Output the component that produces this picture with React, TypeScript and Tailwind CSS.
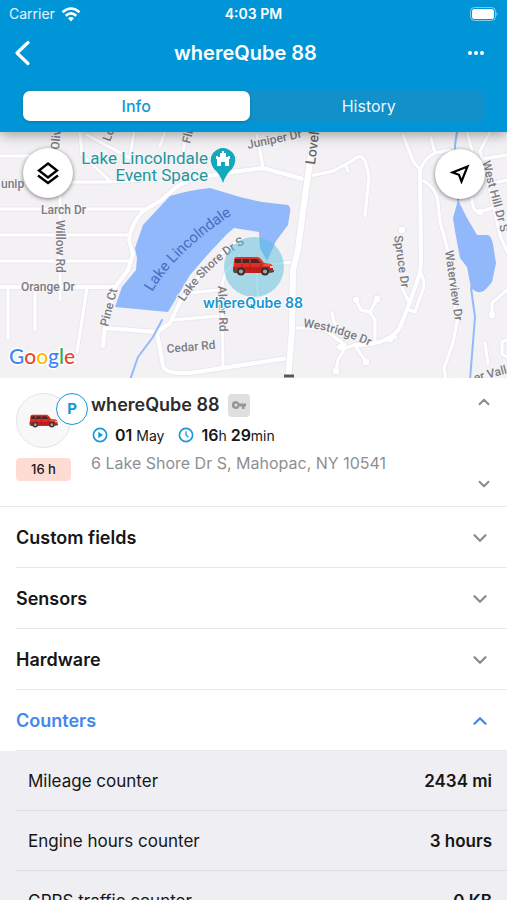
import { useState } from "react";
import { ChevronDown, ChevronUp } from "lucide-react";

const thinRoads = [
  "M0 156H62",
  "M54 132V160",
  "M60 182H107L143 180",
  "M0 182H40",
  "M0 209H143",
  "M0 235H130",
  "M0 261H128",
  "M60 182V300",
  "M110 181L82 155L80 132",
  "M87 135L117 151L130 158L134 132",
  "M186 132L182 160",
  "M165 132L160 146",
  "M257 135L263 168",
  "M8 288V338",
  "M35 290V330",
  "M87 288L77 352",
  "M310 176L333 171L352 161Q361 152 365 161L369 176L365 216",
  "M346 166L348 171",
  "M403 135L413 161L420 170",
  "M431 138L435 153Q424 158 420 171",
  "M435 153L450 150",
  "M467 132L472 150",
  "M490 132L480 151L487 178L500 235L507 252",
  "M482 159L507 155",
  "M490 184L507 180",
  "M472 198Q472 212 480 212L492 208",
  "M424 181Q436 188 438 202L440 222L448 251L457 322L453 343L444 368L446 380",
  "M422 275Q426 285 422 292L415 312L409 310",
  "M402 288L409 302",
  "M188 293L218 290",
  "M173 320L218 316",
  "M240 255L226 272L222 284L223 366",
  "M293 262L256 266L258 296",
  "M356 300L361 310L370 312L377 299",
  "M370 312L375 320V340",
  "M332 313L334 322L342 330",
  "M355 345L345 348L338 347",
  "M355 345L360 353L365 360",
  "M345 348L338 360L336 370",
  "M390 339L396 337",
  "M507 290L492 303V315",
  "M485 343L488 364",
  "M507 340L502 342V354L507 357",
  "M292 328H306L325 330L345 345",
];

const wideRoads = [
  "M0 287H115L105 327L103 346",
  "M202 174L178 186L160 201L143 211Q131 224 129 240L133 254L128 270L115 287",
  "M190 179L232 172L263 168L303 179",
  "M105 328L157 332L170 323L180 302L200 275L222 253L240 240",
  "M157 332L163 366Q165 374 190 373L288 358",
  "M420 171L421 261L420 273L408 307L400 327Q390 345 355 345",
];

const closes = [[356, 300], [377, 299], [341, 347], [366, 362], [336, 371], [402, 230], [492, 315], [480, 212], [390, 339]];

function Suv({ className }: { className: string }) {
  return (
    <svg viewBox="0 0 42 20" className={className} aria-hidden="true">
      <path d="M2 4Q2 1 5 1H25Q27 1 29 3L32 7L39 8Q41 9 41 12V15L37 17H4L1 15Z" fill="#df2f23" />
      <path d="M1 11H41V14L36 17H4L1 15Z" fill="#bd201a" />
      <path d="M3 3H9V7H3ZM11 3H17V7H10ZM19 3H25L29 7H19Z" fill="#4a2629" />
      <path d="M18 3V15M10 8V15M29 8V12" stroke="#961713" strokeWidth="0.7" />
      <path d="M32 8H38L40 10H31Z" fill="#f05238" />
      <path d="M38 10H41V12H38Z" fill="#ffc2ac" />
      <path d="M1 14H5V17H2ZM37 14H42V16L38 17Z" fill="#514a49" />
      <circle cx="9" cy="15.5" r="4" fill="#342f30" />
      <circle cx="9" cy="15.5" r="2.1" fill="#aaa19f" />
      <circle cx="33" cy="15.5" r="4" fill="#342f30" />
      <circle cx="33" cy="15.5" r="2.1" fill="#aaa19f" />
    </svg>
  );
}

function StreetMap() {
  return (
    <svg
      viewBox="0 132 507 246"
      preserveAspectRatio="xMidYMid slice"
      className="block h-[246px] w-full font-[Roboto,sans-serif]"
      role="img"
      aria-label="Map of Lake Lincolndale"
    >
      <defs>
        <path id="lake-label" d="M152 292Q178 248 244 207" />
        <path id="shore-label" d="M184 302Q208 265 246 243" />
        <path id="ridge-label" d="M303 327Q337 331 372 347" />
      </defs>
      <rect y="132" width="507" height="246" fill="#f4f1f5" />
      <g fill="none" strokeLinecap="round" strokeLinejoin="round">
        <g stroke="#eae8ed">
          {thinRoads.map((d) => <path key={d} d={d} strokeWidth="5" />)}
          {wideRoads.map((d) => <path key={d} d={d} strokeWidth="6" />)}
        </g>
        <g fill="#fff" stroke="#e6e4ea">
          {closes.map(([x, y]) => <circle key={x} cx={x} cy={y} r="4" />)}
        </g>
        <g stroke="#fff">
          {thinRoads.map((d) => <path key={d} d={d} strokeWidth="3" />)}
          {wideRoads.map((d) => <path key={d} d={d} strokeWidth="4" />)}
          <path d="M316 132L310 161L302 218L298 250L293 270L292 330L288 380" stroke="#eae8ed" strokeWidth="8" />
          <path d="M316 132L310 161L302 218L298 250L293 270L292 330L288 380" strokeWidth="6" />
        </g>
        <path d="M162 320L153 337L138 357L130 380M457 132L455 145L458 200M471 288L475 317L470 380" stroke="#8fbcf8" strokeWidth="2" />
      </g>
      <path d="M170 196Q190 190 210 188L240 197L262 202L288 205Q291 207 290 212L288 225L276 241L267 261L260 248L259 232L234 228L227 234L210 252L190 275L180 292L168 312L115 307L122 287L136 270L137 258L135 248L143 225Z" fill="#90b8fa" />
      <path d="M458 200L453 218L455 231L460 258L467 267L471 288Q480 296 486 289L492 282L496 263L493 244Q491 235 487 235L477 235L467 218Z" fill="#90b8fa" />

      <g fill="#7c7c82" stroke="#f6f4f7" strokeWidth="2" paintOrder="stroke" fontSize="12" fontWeight="500">
        <text x="41" y="214">Larch Dr</text>
        <text x="21" y="291">Orange Dr</text>
        <text x="1" y="188">unip</text>
        <text transform="translate(56 220) rotate(90)">Willow Rd</text>
        <text transform="translate(59 150) rotate(-85)">Oliv</text>
        <text transform="translate(110 142) rotate(-70)">Lo</text>
        <text transform="translate(190 144) rotate(-76)">Fli</text>
        <text transform="translate(248 149) rotate(-12)">Juniper Dr</text>
        <text transform="translate(315 165) rotate(-83)" fontSize="14" fill="#68686e">Lovell</text>
        <text transform="translate(108 327) rotate(-76)">Pine Ct</text>
        <text transform="translate(167 353) rotate(-5)">Cedar Rd</text>
        <text><textPath href="#shore-label">Lake Shore Dr S</textPath></text>
        <text transform="translate(218 286) rotate(88)">Alder Rd</text>
        <text><textPath href="#ridge-label">Westridge Dr</textPath></text>
        <text transform="translate(394 236) rotate(82)">Spruce Dr</text>
        <text transform="translate(445 251) rotate(82)">Waterview Dr</text>
        <text transform="translate(482 162) rotate(75)">West Hill Dr S</text>
        <text transform="translate(475 382) rotate(-15)">er Valley</text>
      </g>
      <text fontSize="15" fill="#476fc4"><textPath href="#lake-label">Lake Lincolndale</textPath></text>
      <g fill="#24969c" stroke="#f6f4f7" strokeWidth="2" paintOrder="stroke" fontSize="17" textAnchor="end">
        <text x="208" y="164">Lake Lincolndale</text>
        <text x="208" y="181">Event Space</text>
      </g>
      <path d="M223 183Q220 174 214 169Q208 160 213 153Q223 143 233 153Q238 160 232 169Q226 174 223 183Z" fill="#12a9bd" />
      <path d="M220 157V153H222V151H224V153H226V157H229V166H225V162H221V166H217V157ZM216 156H218V159H216ZM228 156H230V159H228Z" fill="#fff" />
      <path d="M284 376H294" stroke="#555" strokeWidth="3" />
      <g fontSize="21" className="font-[Lato,sans-serif]" stroke="#fff" strokeWidth="3" paintOrder="stroke" fontWeight="500">
        <text x="9" y="364">
          <tspan fill="#4285f4">G</tspan><tspan fill="#ea4335">o</tspan><tspan fill="#fbbc05">o</tspan><tspan fill="#4285f4">g</tspan><tspan fill="#34a853">l</tspan><tspan fill="#ea4335">e</tspan>
        </text>
      </g>
      <circle cx="254" cy="267" r="30" fill="#55bdd9" fillOpacity="0.5" />
      <g transform="translate(232 256)">
        <Suv className="h-5 w-[42px]" />
      </g>
      <text x="253" y="308" textAnchor="middle" fontSize="14" fontWeight="600" fill="#1795cf" stroke="#fff" strokeWidth="2" paintOrder="stroke" className="font-[Inter,sans-serif]">
        whereQube 88
      </text>
    </svg>
  );
}

const counters = [
  { label: "Mileage counter", value: "2434 mi" },
  { label: "Engine hours counter", value: "3 hours" },
  { label: "GPRS traffic counter", value: "0 KB" },
];

const sections = ["Custom fields", "Sensors", "Hardware", "Counters"];

export default function App() {
  const [tab, setTab] = useState("Info");
  const [open, setOpen] = useState("Counters");

  return (
    <div className="flex h-screen flex-col overflow-hidden bg-white font-[Inter,sans-serif] text-[#161616]">
      <header className="relative z-10 bg-[#0095d6] pb-[10px] text-white shadow-[0_3px_12px_rgba(0,0,0,0.35)]">
        <div className="grid h-7 grid-cols-3 items-center px-[9px] text-sm">
          <div className="flex items-center gap-1.5 text-white/90">
            Carrier
            <svg viewBox="0 0 20 15" className="h-[15px] w-5" aria-label="Wi-Fi">
              <g fill="none" stroke="#fff" strokeWidth="2.6">
                <path d="M1.5 5.2Q10-2.2 18.5 5.2" />
                <path d="M4.7 8.7Q10 4 15.3 8.7" />
              </g>
              <path d="M7 11.2Q10 8.7 13 11.2L10 14.5Z" fill="#fff" />
            </svg>
          </div>
          <div className="text-center font-semibold">4:03 PM</div>
          <svg viewBox="0 0 28 14" className="h-[14px] w-7 justify-self-end" aria-label="Battery">
            <rect x="0.5" y="0.5" width="25" height="13" rx="4" fill="none" stroke="#fff" strokeOpacity="0.5" />
            <rect x="2" y="2" width="22" height="10" rx="2.5" fill="#fff" />
            <path d="M26.5 5Q28.5 7 26.5 9Z" fill="#fff" fillOpacity="0.6" />
          </svg>
        </div>
        <div className="flex h-[50px] items-center justify-between px-[13px]">
          <button aria-label="Back" className="w-8">
            <svg viewBox="0 0 18 26" className="h-[26px] w-[18px]" fill="none" stroke="#fff" strokeWidth="3.2" strokeLinecap="round" strokeLinejoin="round">
              <path d="M15 2.5L4 13L15 23.5" />
            </svg>
          </button>
          <h1 className="text-xl font-semibold">whereQube 88</h1>
          <button aria-label="More options" className="flex w-12 justify-end gap-0.5 pr-[10px]">
            <span className="size-1 shrink-0 rounded-full bg-white" />
            <span className="size-1 shrink-0 rounded-full bg-white" />
            <span className="size-1 shrink-0 rounded-full bg-white" />
          </button>
        </div>
        <div role="tablist" className="mx-[22px] mt-3 grid h-8 grid-cols-2 rounded-lg bg-[#1190c9] p-px">
          {["Info", "History"].map((name) => (
            <button
              key={name}
              role="tab"
              aria-selected={tab === name}
              onClick={() => setTab(name)}
              className={tab === name ? "mr-1 rounded-[7px] bg-white text-base font-medium text-[#1298d3] shadow-[0_1px_3px_rgba(0,0,0,0.2)]" : "text-base text-white/95"}
            >
              {name}
            </button>
          ))}
        </div>
      </header>

      <main className="min-h-0 flex-1 overflow-y-auto [scrollbar-width:none]">
        <div className="relative">
          <StreetMap />
          <button aria-label="Map layers" className="absolute top-4 left-[23px] flex size-[50px] items-center justify-center rounded-full bg-white shadow-[0_1px_4px_rgba(0,0,0,0.5)]">
            <svg viewBox="0 0 24 24" className="size-6" fill="none" stroke="#000" strokeWidth="2.4">
              <path d="M12 2.5L21 9.5L12 16.5L3 9.5Z" />
              <path d="M2 14.5L12 22L22 14.5" />
            </svg>
          </button>
          <button aria-label="Center on vehicle" className="absolute top-[17px] right-[22px] flex size-[50px] items-center justify-center rounded-full bg-white shadow-[0_1px_4px_rgba(0,0,0,0.5)]">
            <svg viewBox="0 0 20 20" className="size-5" fill="none" stroke="#000" strokeWidth="2.2">
              <path d="M17.5 2.5L2.5 8.5L9 10.8L11.5 17.5Z" />
            </svg>
          </button>
        </div>

        <section className="flex h-[129px] border-b border-[#e8e8ea] pt-[15px] pr-4 pl-4">
          <div className="w-[75px] shrink-0">
            <div className="relative flex size-[55px] items-center justify-center rounded-full border border-[#e4e4e6] bg-[#f8f8f9]">
              <Suv className="h-[14px] w-[29px]" />
              <span className="absolute -top-px left-[39px] flex size-8 items-center justify-center rounded-full border border-[#1a98d3] bg-white text-[15px] font-bold text-[#1298d6]">P</span>
            </div>
            <div className="mt-[10px] flex h-[23px] w-[55px] items-center justify-center rounded bg-[#ffdcd3] text-[13px] font-medium">16 h</div>
          </div>
          <div className="min-w-0 flex-1">
            <div className="flex h-6 items-center gap-2">
              <h2 className="text-lg font-semibold text-[#2c2c2e]">whereQube 88</h2>
              <span className="flex h-[23px] w-[22px] items-center justify-center rounded bg-[#dfdfdf]">
                <svg viewBox="0 0 14 10" className="h-[10px] w-[14px]" aria-label="Ignition key">
                  <path d="M4 1A4 4 0 1 0 7.5 6.5H10V9H12.5V6.5H14V3.5H7.5A4 4 0 0 0 4 1ZM4 3.5A1.5 1.5 0 1 1 4 6.5A1.5 1.5 0 1 1 4 3.5Z" fill="#969696" fillRule="evenodd" />
                </svg>
              </span>
            </div>
            <div className="mt-1.5 flex h-6 items-center text-sm">
              <svg viewBox="0 0 16 16" className="mr-[7px] ml-px size-4" aria-hidden="true">
                <circle cx="8" cy="8" r="6.6" fill="none" stroke="#1b98d5" strokeWidth="1.7" />
                <path d="M6.3 4.7L11 8L6.3 11.3Z" fill="#1b98d5" />
              </svg>
              <span><span className="text-base font-semibold">01</span> May</span>
              <svg viewBox="0 0 16 16" className="mr-[7px] ml-3.5 size-4" fill="none" stroke="#1b98d5" strokeWidth="1.7" aria-hidden="true">
                <circle cx="8" cy="8" r="6.6" />
                <path d="M8 4.2V8L10.5 10.2" strokeWidth="1.3" />
              </svg>
              <span><span className="text-base font-semibold">16</span>h <span className="text-base font-semibold">29</span>min</span>
            </div>
            <p className="mt-1 text-base leading-6 text-[#8f8f93]">6 Lake Shore Dr S, Mahopac, NY 10541</p>
          </div>
          <div className="flex h-[100px] w-4 flex-col justify-between text-[#8a8a8c]">
            <button aria-label="Previous vehicle"><ChevronUp className="size-[18px] stroke-[2.5]" /></button>
            <button aria-label="Next vehicle"><ChevronDown className="size-[18px] stroke-[2.5]" /></button>
          </div>
        </section>

        {sections.map((name) => {
          const active = open === name;
          return (
            <section key={name}>
              <h3 className="ml-4 border-b border-[#e9e9eb]">
                <button
                  aria-expanded={active}
                  onClick={() => setOpen(active ? "" : name)}
                  className={active ? "flex h-[60px] w-full items-center justify-between pt-0.5 pr-4 text-lg font-semibold text-[#4287ee]" : "flex h-[60px] w-full items-center justify-between pt-0.5 pr-4 text-lg font-semibold"}
                >
                  {name}
                  {active ? <ChevronUp className="size-[22px] stroke-[2.5]" /> : <ChevronDown className="size-[22px] stroke-[2.5] text-[#8b8b8d]" />}
                </button>
              </h3>
              {active && name === "Counters" && (
                <dl className="bg-[#efeef3] pl-4">
                  {counters.map((row) => (
                    <div key={row.label} className="flex h-[60px] items-center justify-between border-b border-[#dddde2] pt-0.5 pr-[15px] pl-3 text-[17px]">
                      <dt>{row.label}</dt>
                      <dd className="font-semibold">{row.value}</dd>
                    </div>
                  ))}
                </dl>
              )}
            </section>
          );
        })}
      </main>
    </div>
  );
}
